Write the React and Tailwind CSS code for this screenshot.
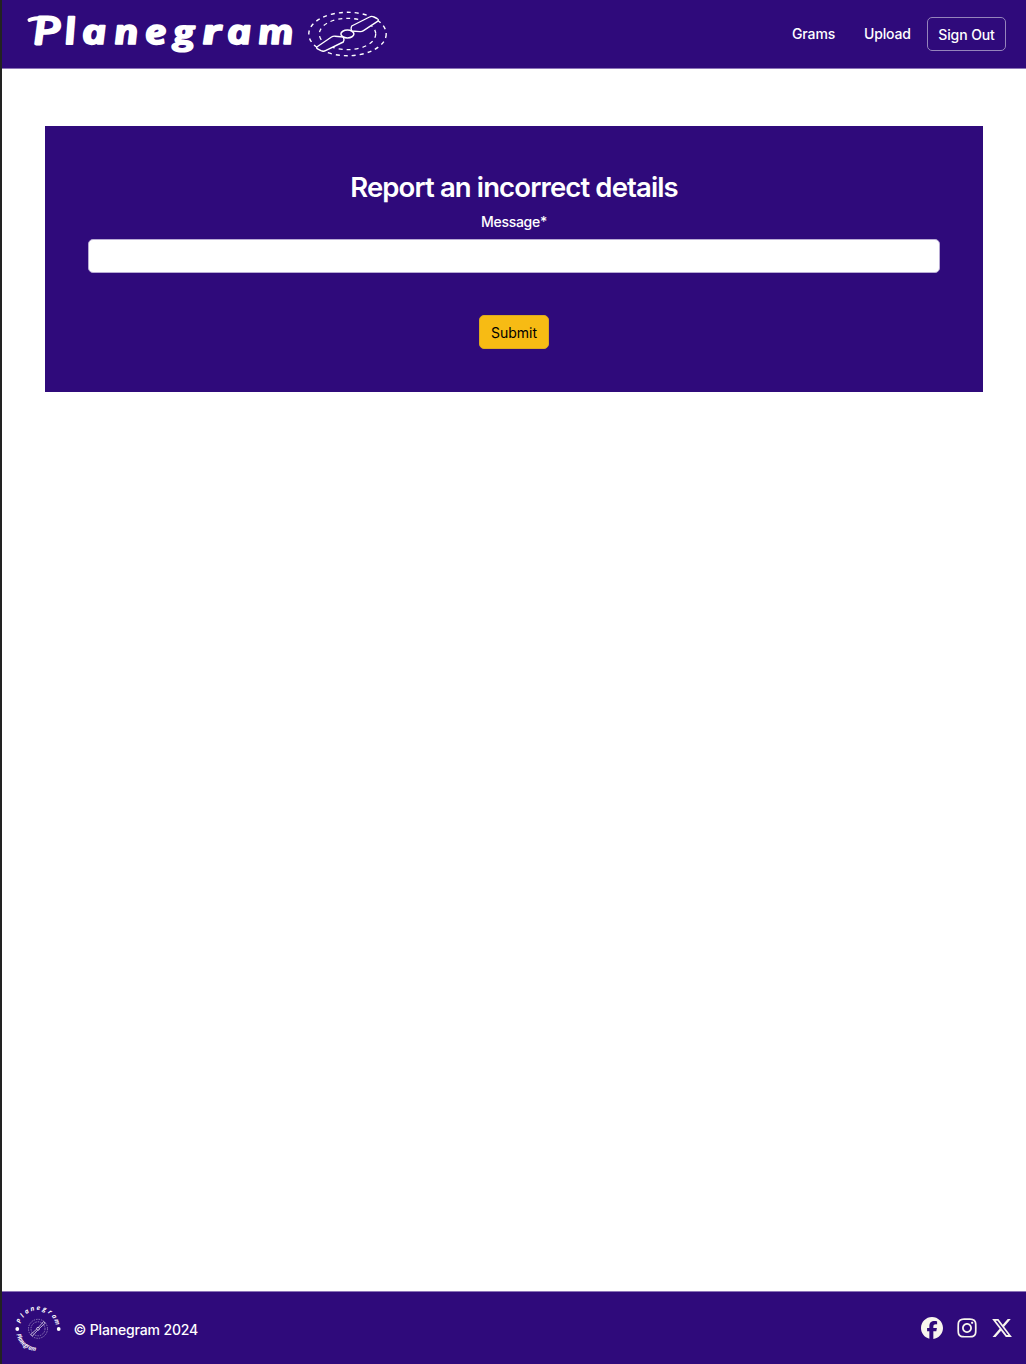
import React from "react";
import { FaFacebook, FaInstagram, FaXTwitter } from "react-icons/fa6";

const WORDMARK = [
  ["P", 34, 28, 38, 500, 2.8],
  ["l", 66, 11, 36, 700, 2],
  ["a", 83, 25, 34, 700, 1.6],
  ["n", 115, 25, 34, 700, 1.6],
  ["e", 146, 22, 34, 700, 1.6],
  ["g", 174, 22, 33, 700, 1.4],
  ["r", 203, 20, 34, 700, 1.6],
  ["a", 228, 25, 34, 700, 1.6],
  ["m", 259, 36, 34, 700, 1.6],
];

function Propeller({ dash }) {
  return (
    <g fill="none" stroke="white" strokeLinejoin="round">
      <ellipse cx="347.5" cy="34" rx="38.7" ry="21.7" strokeWidth="1.4" strokeDasharray={dash} />
      <ellipse cx="347.5" cy="34" rx="28.2" ry="15.7" strokeWidth="1.3" strokeDasharray={dash} />
      <path
        className="fill-[#2f0a7b]"
        strokeWidth="1.4"
        d="M351.5 31 Q350.5 28 351.7 26 L369.5 17 Q371.5 15.8 374 17 L377 18.5 Q379.5 20 377.5 21.3 L363.5 30.6 Q362 31.7 360 31.6 Z M343.5 37 Q344.5 40 343.3 42 L325.5 50.7 Q323.5 51.7 321 50.7 L318 49.2 Q315.5 48 317.5 46.5 L331.5 37 Q333 36 335 36.2 Z"
      />
      <ellipse className="fill-[#2f0a7b]" cx="347.4" cy="34" rx="6.5" ry="3.9" strokeWidth="1.5" />
    </g>
  );
}

function Logo() {
  return (
    <svg className="block h-[68px] w-[400px]" viewBox="0 0 400 68" role="img" aria-label="Planegram">
      <g className="fill-white stroke-white font-['Open_Sans',sans-serif] italic" strokeLinejoin="round">
        {WORDMARK.map(([letter, x, width, size, weight, stroke], i) => (
          <text key={i} transform={`translate(${x} 44) skewX(8)`} fontSize={size} fontWeight={weight} strokeWidth={stroke} textLength={width} lengthAdjust="spacingAndGlyphs">
            {letter}
          </text>
        ))}
      </g>
      <path d="M29.5 20 Q34 18 43 18" fill="none" stroke="white" strokeWidth="4" strokeLinecap="round" />
      <Propeller dash="4 4" />
    </svg>
  );
}

const RING = "Planegram".split("");

function Badge() {
  return (
    <svg className="block size-12" viewBox="0 0 48 48" aria-hidden="true">
      <g className="fill-white font-['Open_Sans',sans-serif] font-bold italic" textAnchor="middle">
        {RING.map((c, i) => (
          <text key={i} fontSize="6.5" x="24" y="6" transform={`rotate(${-70 + i * 17.8} 24 24)`}>
            {c}
          </text>
        ))}
      </g>
      <circle cx="3.3" cy="25" r="1.9" fill="white" />
      <circle cx="44.7" cy="25" r="1.9" fill="white" />
      <path id="badge-arc" d="M2.3 30.5 A22.5 22.5 0 0 0 24 47.3" fill="none" />
      <text className="fill-white font-['Open_Sans',sans-serif] font-bold italic" fontSize="6.5">
        <textPath href="#badge-arc" textLength="27" lengthAdjust="spacingAndGlyphs">Planegram</textPath>
      </text>
      <g fill="none" stroke="white" strokeWidth="0.5" opacity="0.85" transform="translate(0 0.8)">
        <circle cx="24" cy="24" r="9.5" strokeDasharray="1.5 1" />
        <circle cx="24" cy="24" r="7" strokeDasharray="1.5 1" />
        <path strokeWidth="0.8" d="M24.5 22.5 L29.5 16.8 L31.3 18.3 L25.5 23.5 M23.5 25.5 L18.5 31.2 L16.7 29.7 L22.5 24.5" />
        <circle cx="24" cy="24" r="1.4" strokeWidth="0.9" />
      </g>
    </svg>
  );
}

export default function App() {
  return (
    <div className="flex h-[1364px] w-[1026px] flex-col border-l-2 border-[#222222] bg-white font-[Inter,sans-serif] text-[14px] text-white">
      <header className="flex h-[69px] items-start justify-between border-b border-[#8c75b8] bg-[#2f0a7b]">
        <div className="-ml-0.5">
          <Logo />
        </div>
        <nav className="flex h-[68px] items-center pr-5 font-medium">
          <a className="mr-[29px] w-[43px] pb-0.5 whitespace-nowrap tracking-[-0.1px]">Grams</a>
          <a className="mr-4 w-[47px] pb-0.5 whitespace-nowrap tracking-[-0.15px]">Upload</a>
          <button className="h-[34px] w-[79px] rounded-[5px] border border-[#9584bc] whitespace-nowrap tracking-[-0.1px]">
            Sign Out
          </button>
        </nav>
      </header>

      <main className="grow px-[43px] pt-[57px]">
        <form className="flex h-[266px] w-[938px] flex-col items-center bg-[#2f0a7b] px-[43px] pt-[43px]">
          <h1 className="text-[27.5px] leading-[36px] font-semibold tracking-[-0.87px] whitespace-nowrap">Report an incorrect details</h1>
          <label className="mt-[7px] leading-5 font-medium tracking-[-0.3px]" htmlFor="message">Message*</label>
          <input id="message" className="mt-[7px] h-[34px] w-full rounded-[5px] border border-[#b8abd4] bg-white px-3 text-black outline-none" />
          <button type="button" className="mt-[42px] h-[34px] w-[70px] rounded-[5px] border border-[#dca91f] bg-[#f7bb14] pt-px text-black">Submit</button>
        </form>
      </main>

      <footer className="flex h-[73px] items-center justify-between border-t border-[#8c75b8] bg-[#2f0a7b] pr-[13px] pl-3">
        <div className="flex items-center gap-[11.5px]">
          <Badge />
          <p className="pt-0.5 font-medium tracking-[-0.15px]">© Planegram 2024</p>
        </div>
        <div className="flex items-center text-[22px] text-[#f8f5ed]">
          <FaFacebook />
          <FaInstagram className="ml-[13px]" />
          <FaXTwitter className="ml-[13px]" />
        </div>
      </footer>
    </div>
  );
}
